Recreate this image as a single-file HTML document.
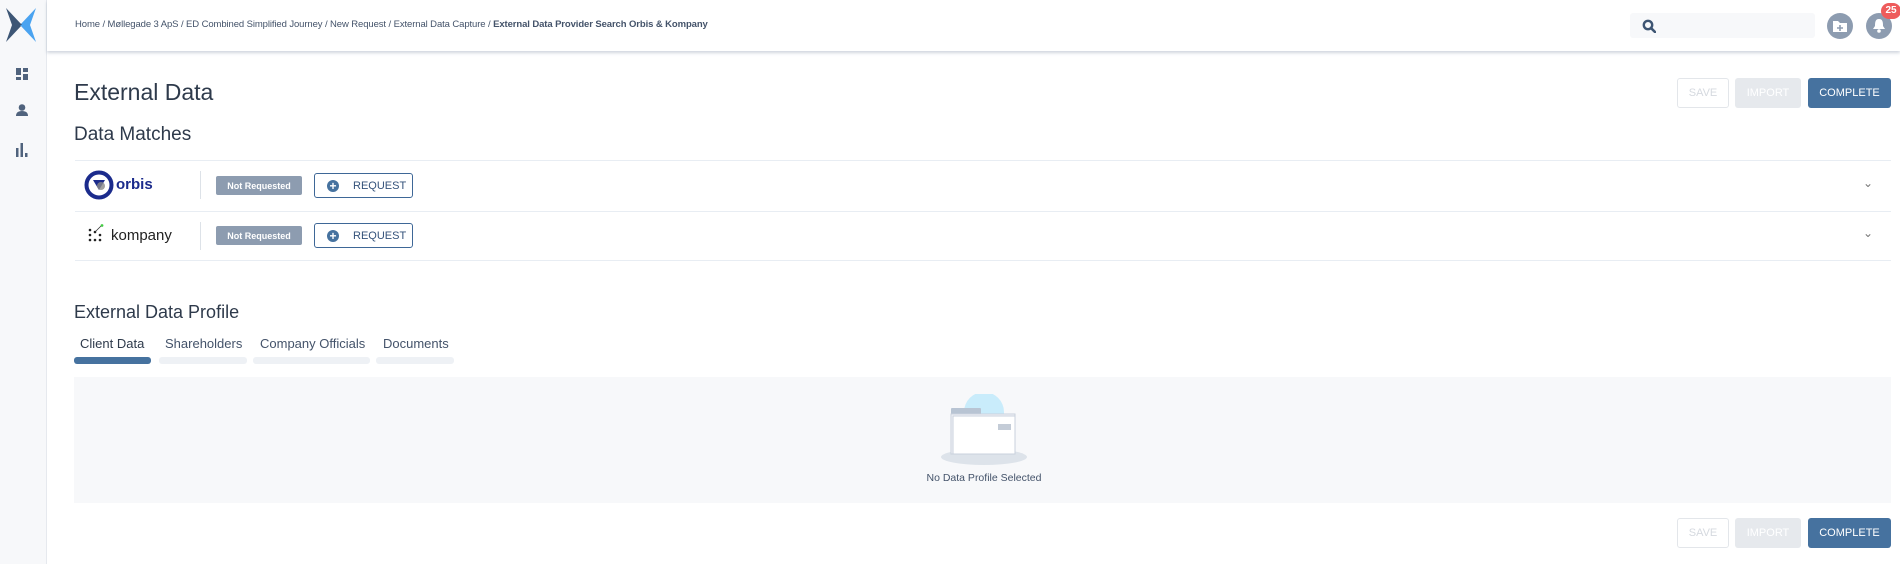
<!DOCTYPE html>
<html><head><meta charset="utf-8"><style>
*{box-sizing:border-box;margin:0;padding:0}
body{width:1900px;height:564px;overflow:hidden;background:#fff;font-family:"Liberation Sans",sans-serif;color:#2e3a4b;position:relative}
.abs{position:absolute}
.side{left:0;top:0;width:47px;height:564px;background:#f7f8fa;border-right:1px solid #e6e9ee}
.hdr{left:47px;top:0;right:0;height:51px;background:#fff;box-shadow:0 2px 3px rgba(120,135,160,.35)}
.bc{left:75px;top:19px;font-size:9.5px;color:#44536a;white-space:nowrap;letter-spacing:-.1px}
.btn{position:absolute;height:30px;border-radius:3px;font-size:11px;display:flex;align-items:center;justify-content:center}
.save{border:1px solid #e3e6ea;color:#d5d9df;background:#fff}
.imp{background:#e6e9ed;color:#fff}
.comp{background:#46729f;color:#fff}
.line{left:75px;width:1816px;height:1px;background:#e8edf3}
.nr{background:#8d9cb0;color:#fff;font-size:9px;font-weight:bold;width:86px;height:19px;border-radius:2px;display:flex;align-items:center;justify-content:center}
.req{border:1px solid #3e6797;border-radius:3px;width:99px;height:25px;font-size:11px;color:#34527a;display:flex;align-items:center;padding-left:12px}
.req i{display:inline-block;width:12px;height:12px;border-radius:50%;background:#46729f;color:#fff;font-style:normal;font-size:12px;line-height:12px;text-align:center;margin-right:14px;font-weight:bold}
.div{width:1px;height:28px;background:#dde2e8}
.chev{font-size:12px;color:#777}
.tab{font-size:13px;color:#44536a;top:336px}
.bar{top:357px;height:7px;border-radius:3px;background:#eef1f5}
</style></head><body>
<div class="abs side"></div>
<svg class="abs" style="left:6px;top:8px" width="30" height="34" viewBox="0 0 30 34"><path d="M0 0 L16 17 L0 34 L6 17Z" fill="#3d5675"/><path d="M30 0 L14 17 L30 34 L24 17Z" fill="#4aa3f0"/><path d="M14 17 L16 17 L15 15.5Z" fill="#3d5675"/></svg>
<svg class="abs" style="left:16px;top:68px" width="12" height="12"><rect x="0" y="0" width="5" height="7" fill="#50637d"/><rect x="7" y="0" width="5" height="4" fill="#50637d"/><rect x="0" y="9" width="5" height="3" fill="#50637d"/><rect x="7" y="6" width="5" height="6" fill="#50637d"/></svg>
<svg class="abs" style="left:16px;top:104px" width="12" height="12"><circle cx="6" cy="3.5" r="3.3" fill="#50637d"/><path d="M0 12 Q0 7 6 7 Q12 7 12 12Z" fill="#50637d"/></svg>
<svg class="abs" style="left:16px;top:143px" width="12" height="14"><rect x="0" y="5" width="2.5" height="9" fill="#50637d"/><rect x="4.5" y="0" width="2.5" height="14" fill="#50637d"/><rect x="9" y="10" width="2.5" height="4" fill="#50637d"/></svg>
<div class="abs hdr"></div>
<div class="abs bc">Home / Møllegade 3 ApS / ED Combined Simplified Journey / New Request / External Data Capture / <b>External Data Provider Search Orbis &amp; Kompany</b></div>
<div class="abs" style="left:1630px;top:13px;width:185px;height:25px;background:#f7f8fa;border-radius:3px"></div>
<svg class="abs" style="left:1642px;top:19px" width="14" height="14"><circle cx="6" cy="6" r="4.2" fill="none" stroke="#3e5573" stroke-width="2.4"/><path d="M9 9 L13 13" stroke="#3e5573" stroke-width="2.6" stroke-linecap="round"/></svg>
<div class="abs" style="left:1827px;top:13px;width:26px;height:26px;border-radius:50%;background:#8d9cb0"></div>
<svg class="abs" style="left:1832px;top:19px" width="16" height="14"><path d="M1 2 h5 l2 2 h7 v9 h-14z" fill="#fff"/><path d="M8 6 v6 M5 9 h6" stroke="#8d9cb0" stroke-width="1.6"/></svg>
<div class="abs" style="left:1866px;top:13px;width:26px;height:26px;border-radius:50%;background:#8d9cb0"></div>
<svg class="abs" style="left:1872px;top:18px" width="14" height="16"><path d="M7 1 C3 1 3 5 3 8 L1 11 H13 L11 8 C11 5 11 1 7 1Z" fill="#fff"/><circle cx="7" cy="13" r="1.8" fill="#fff"/></svg>
<div class="abs" style="left:1881px;top:3px;width:20px;height:16px;border-radius:8px;background:#ee5b5b;color:#fff;font-size:10px;font-weight:bold;text-align:center;line-height:16px">25</div>

<div class="abs" style="left:74px;top:79px;font-size:23px;color:#2e3a4b">External Data</div>
<div class="btn save" style="left:1677px;top:78px;width:52px">SAVE</div>
<div class="btn imp" style="left:1735px;top:78px;width:66px">IMPORT</div>
<div class="btn comp" style="left:1808px;top:78px;width:83px">COMPLETE</div>
<div class="abs" style="left:74px;top:124px;font-size:19px;color:#2e3a4b">Data Matches</div>
<div class="abs line" style="top:160px"></div>
<div class="abs line" style="top:211px"></div>
<div class="abs line" style="top:260px"></div>

<svg class="abs" style="left:84px;top:170px" width="30" height="30"><circle cx="15" cy="15" r="12.5" fill="none" stroke="#1b2b8c" stroke-width="4"/><path d="M9 10 H21 L15 20Z" fill="#1b2b8c"/><circle cx="17" cy="16" r="4" fill="#888" opacity=".8"/></svg>
<div class="abs" style="left:116px;top:176px;font-size:15px;font-weight:bold;color:#1b2b8c">orbis</div>
<div class="abs div" style="left:200px;top:171px"></div>
<div class="abs nr" style="left:216px;top:176px">Not Requested</div>
<div class="abs req" style="left:314px;top:173px"><i>+</i>REQUEST</div>
<div class="abs chev" style="left:1863px;top:176px">&#8964;</div>

<svg class="abs" style="left:88px;top:224px" width="16" height="22"><g fill="#222"><circle cx="2" cy="6" r="1.3"/><circle cx="2" cy="11" r="1.3"/><circle cx="2" cy="16" r="1.3"/><circle cx="7" cy="8" r="1.3"/><circle cx="7" cy="16" r="1.3"/><circle cx="12" cy="11" r="1.3"/><circle cx="12" cy="16" r="1.3"/></g><path d="M7 8 L14 1" stroke="#333" stroke-width=".8"/><circle cx="14" cy="1.5" r="1.4" fill="#4c4"/></svg>
<div class="abs" style="left:111px;top:227px;font-size:15px;color:#222">kompany</div>
<div class="abs div" style="left:200px;top:222px"></div>
<div class="abs nr" style="left:216px;top:226px">Not Requested</div>
<div class="abs req" style="left:314px;top:223px"><i>+</i>REQUEST</div>
<div class="abs chev" style="left:1863px;top:226px">&#8964;</div>

<div class="abs" style="left:74px;top:302px;font-size:18px;color:#2e3a4b">External Data Profile</div>
<div class="abs tab" style="left:80px;color:#2e3a4b">Client Data</div>
<div class="abs tab" style="left:165px">Shareholders</div>
<div class="abs tab" style="left:260px">Company Officials</div>
<div class="abs tab" style="left:383px">Documents</div>
<div class="abs bar" style="left:74px;width:77px;background:#46729f"></div>
<div class="abs bar" style="left:159px;width:88px"></div>
<div class="abs bar" style="left:253px;width:117px"></div>
<div class="abs bar" style="left:376px;width:78px"></div>
<div class="abs" style="left:74px;top:377px;width:1817px;height:126px;background:#f7f8fa"></div>
<svg class="abs" style="left:940px;top:394px" width="90" height="74"><ellipse cx="44" cy="63" rx="43" ry="8" fill="#dde3ea"/><path d="M24 18 A20 20 0 0 1 64 18 V30 H24Z" fill="#c9ecfb"/><rect x="11" y="14" width="30" height="8" rx="1" fill="#b8c4d3"/><rect x="11" y="20" width="64" height="40" fill="#f2f4f7" stroke="#c9d1dc"/><rect x="13" y="22" width="62" height="38" fill="#fff" stroke="#c9d1dc"/><rect x="58" y="30" width="13" height="6" fill="#c4ccd7"/></svg>
<div class="abs" style="left:900px;top:472px;width:168px;text-align:center;font-size:10.5px;color:#44536a">No Data Profile Selected</div>
<div class="btn save" style="left:1677px;top:518px;width:52px">SAVE</div>
<div class="btn imp" style="left:1735px;top:518px;width:66px">IMPORT</div>
<div class="btn comp" style="left:1808px;top:518px;width:83px">COMPLETE</div>
</body></html>
